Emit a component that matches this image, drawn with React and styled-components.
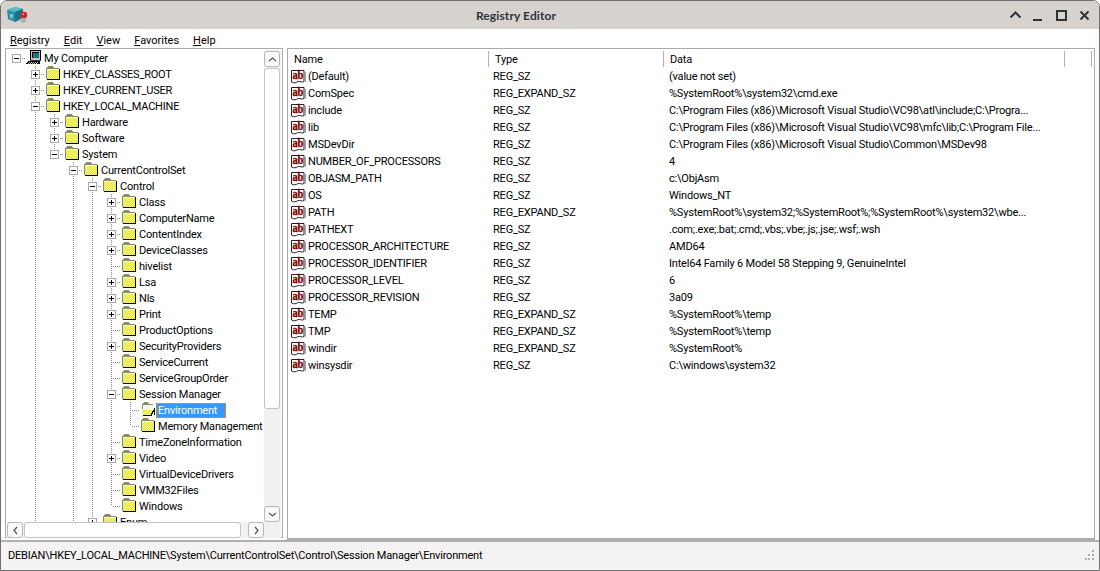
import React from 'react'
import styled, { createGlobalStyle } from 'styled-components'

const UI_FONT = 'Roboto, "Liberation Sans", Arial, sans-serif'

const Global = createGlobalStyle`
  html, body { margin: 0; padding: 0; background: #fff; }
  * { box-sizing: border-box; }
`

// ------------------------ window frame

const Win = styled.div`
  width: 1100px;
  height: 571px;
  display: flex;
  flex-direction: column;
  overflow: hidden;
  background: #fff;
  border: 1px solid #72706e;
  border-radius: 7px 7px 0 0;
  font: 11px ${UI_FONT};
  letter-spacing: -0.2px;
  color: #000;
`

const TitleBar = styled.div`
  height: 28px;
  flex: none;
  display: flex;
  align-items: center;
  background: #d6d2ce;
`

const AppIcon = styled.div`
  width: 30px;
  padding-left: 4px;
  display: flex;
  align-items: center;
`

const Title = styled.div`
  flex: 1;
  text-align: center;
  font: bold 12px Lato, "Noto Sans", sans-serif;
  letter-spacing: 0.1px;
  color: #2e3436;
`

const WinControls = styled.div`
  width: 98px;
  padding-left: 3px;
  display: flex;
  align-items: center;
`

const WinButton = styled.div`
  width: 23px;
  height: 16px;
  display: flex;
  justify-content: center;
  align-items: center;
`

const MenuBar = styled.div`
  height: 19px;
  flex: none;
  display: flex;
  align-items: center;
  gap: 14px;
  padding: 3px 0 0 9px;
  letter-spacing: 0;
  u { text-decoration: underline; }
`

const Main = styled.div`
  height: 492px;
  flex: none;
  display: flex;
  align-items: flex-start;
  gap: 4px;
  padding: 0 4px;
`

const StatusBar = styled.div`
  flex: 1;
  display: flex;
  align-items: center;
  justify-content: space-between;
  padding: 0 4px 2px 7px;
  background: #f4f2f2;
  border-top: 2px solid #b2b0ae;
`

// ------------------------ tree pane

const TreePane = styled.div`
  width: 278px;
  height: 490px;
  flex: none;
  display: flex;
  flex-direction: column;
  padding: 1px 1px 0;
  border: 1px solid #ababab;
`

const TreeTop = styled.div`
  height: 472px;
  display: flex;
`

const TreeView = styled.div`
  flex: 1;
  overflow: hidden;
`

const TreeRow = styled.div`
  height: 16px;
  display: flex;
  align-items: center;
  white-space: nowrap;
`

const Cell = styled.div`
  width: 19px;
  height: 16px;
  flex: none;
  position: relative;
  &::before {
    content: '';
    position: absolute;
    left: 9px;
    top: 0;
    width: 1px;
    height: ${p => (p.$v === 'full' ? '16px' : p.$v === 'half' ? '8px' : '0')};
    background: repeating-linear-gradient(to bottom, #8c8c8c 0 1px, transparent 1px 2px);
  }
  &::after {
    content: '';
    position: absolute;
    left: 10px;
    top: 8px;
    height: 1px;
    width: ${p => (p.$h ? '9px' : '0')};
    background: repeating-linear-gradient(to right, transparent 0 1px, #8c8c8c 1px 2px);
  }
`

const Expander = styled.div`
  position: absolute;
  z-index: 1;
  left: 5px;
  top: 4px;
  width: 9px;
  height: 9px;
  background: #fff;
  border: 1px solid #a8a8a8;
  &::before {
    content: '';
    position: absolute;
    left: 1px;
    top: 3px;
    width: 5px;
    height: 1px;
    background: #000;
  }
  &::after {
    content: '';
    position: absolute;
    left: 3px;
    top: 1px;
    width: 1px;
    height: ${p => (p.$open ? '0' : '5px')};
    background: #000;
  }
`

const NodeIcon = styled.div`
  width: 16px;
  height: 16px;
  flex: none;
  display: flex;
`

const NodeLabel = styled.span`
  height: 15px;
  line-height: 13px;
  padding: 0 1px;
  border: 1px solid transparent;
  ${p => p.$selected && `
    padding-right: 8px;
    background: #3399ff;
    color: #fff;
    border: 1px solid #e0821e;
  `}
`

// ------------------------ scrollbars

const VScroll = styled.div`
  width: 17px;
  flex: none;
  display: flex;
  flex-direction: column;
  align-items: center;
  background: #f2f0f0;
  padding-top: 1px;
  padding-right: 1px;
`

const HScroll = styled.div`
  height: 16px;
  flex: none;
  display: flex;
  align-items: center;
  background: #f2f0f0;
  padding-right: 17px;
`

const ScrollBtn = styled.div`
  width: 16px;
  height: 16px;
  flex: none;
  display: flex;
  justify-content: center;
  align-items: center;
  background: #fafafa;
  border: 1px solid #b8b8b8;
  border-radius: 3px;
`

const VThumb = styled.div`
  width: 16px;
  height: 341px;
  margin-top: 1px;
  background: #fff;
  border: 1px solid #c2c2c2;
  border-radius: 3px;
`

const HThumb = styled.div`
  width: 217px;
  height: 16px;
  margin-left: 1px;
  background: #fff;
  border: 1px solid #c2c2c2;
  border-radius: 3px;
`

const Spacer = styled.div`
  flex: 1;
`

// ------------------------ list pane

const ListPane = styled.div`
  flex: 1;
  height: 492px;
  padding: 1px 0 0 0;
  border: 1px solid #ababab;
  border-bottom-width: 2px;
  overflow: hidden;
`

const Columns = styled.div`
  display: grid;
  grid-template-columns: 201px 175px 401px 27px 1px;
  height: ${p => (p.$header ? '18px' : '17px')};
  align-items: center;
  white-space: nowrap;
`

const HeadCell = styled.div`
  height: 16px;
  line-height: 17px;
  padding-left: 6px;
  border-right: 1px solid #b4b4b4;
`

const NameCell = styled.div`
  display: flex;
  align-items: center;
  gap: 2px;
  padding-left: 3px;
`

const TextCell = styled.div`
  padding-left: ${p => p.$pad}px;
`

// ------------------------ drawings

// explicit pixels instead of an svg pattern, the pattern came out uneven between rows
const dither = (x0, y0, x1, y1) => {
  let d = ''
  for (let y = y0; y < y1; y++) {
    for (let x = x0; x < x1; x++) {
      if ((x + y) % 2 === 0) d += `M${x} ${y}h1v1h-1z`
    }
  }
  return d
}

const FOLDER_DOTS = dither(2, 4, 14, 13)
const OPEN_DOTS = dither(2, 8, 13, 13)

const Folder = () => (
  <svg width="16" height="16" viewBox="0 0 16 16" shapeRendering="crispEdges">
    <path d="M1 2h1V1h1V0h5v1h1v1h5v11H1z" fill="#ffff30" />
    <path d={FOLDER_DOTS} fill="#dedc90" />
    <path d="M1 2h1V1h1V0h5v1h1v1h5v1H2v10H1z" fill="#8a8a70" />
    <path d="M2 3h12v1H2z" fill="#fff" />
    <path d="M14 3h1v11H2v-1h12z" fill="#000" />
  </svg>
)

const OpenFolder = () => (
  <svg width="17" height="16" viewBox="0 0 17 16" shapeRendering="crispEdges">
    <path d="M2 2h1V1h1V0h5v1h1v1h4v5H2z" fill="#f4f4f0" />
    <path d="M2 2h1V1h1V0h5v1h1v1h4v1H3v4H2z" fill="#8a8a70" />
    <path d="M1 7h12v1h1v1h1v1h-1v1h-1v1h-1v1H4v-1H3v-1H2V9H1z" fill="#ffff30" />
    <path d={OPEN_DOTS} fill="#dedc90" />
    <path d="M1 7h12v1H2v1H1z" fill="#f4f4f0" />
    <path d="M14 8h1v2h-1v2h-1v2H3v-1h9v-2h1V9h1z" fill="#000" />
    <path d="M15 6h1v7h-1z" fill="#000" />
  </svg>
)

const ComputerIcon = () => (
  <svg width="16" height="16" viewBox="0 0 16 16" shapeRendering="crispEdges">
    <path d="M5 1h9v9H5z" fill="#c0c0c0" />
    <path d="M4 0h11v1H4zM4 1h1v9H4zM14 1h1v10h-1z" fill="#000" />
    <path d="M6 2h7v6H6z" fill="#008080" />
    <path d="M6 2h7v1H7v5H6z" fill="#000" />
    <path d="M4 10h11v1H4z" fill="#404040" />
    <path d="M2 11h12v1H2zM1 12h13v1H1zM0 13h14v1H0z" fill="#000" />
    <path d="M3 12h1v1H3zM5 12h1v1H5zM7 12h1v1H7zM9 12h1v1H9zM11 12h1v1h-1zM2 13h1v1H2zM4 13h1v1H4zM6 13h1v1H6zM8 13h1v1H8zM10 13h1v1h-1z" fill="#c0c0c0" />
  </svg>
)

const AbIcon = () => (
  <svg width="15" height="16" viewBox="0 0 15 16">
    <path d="M.5 1.5h12.5v11c-2 1.6-4-.9-6.2.2S3 14.4.5 13z" fill="#fff" stroke="#222" />
    <path d="M14.3 3v10" stroke="#8c8c8c" />
    <text x="1.4" y="10" textLength="11" lengthAdjust="spacingAndGlyphs" fontFamily="Liberation Serif, serif" fontWeight="bold" fontSize="12" fill="#800000" stroke="#800000" strokeWidth="0.35" letterSpacing="0">ab</text>
  </svg>
)

const RegIcon = () => (
  <svg width="24" height="20" viewBox="0 0 24 20">
    <path d="M2 5l8-3 8 2v9l-8 4-7-3z" fill="#2f8fa3" />
    <path d="M2 5l8-3 8 2-8 3z" fill="#58bccb" />
    <path d="M10 7v10l8-4V4z" fill="#1d7288" />
    <path d="M5 9h3v4H5z" fill="#6fc6d4" />
    <path d="M13 15l6-3 2 1v4l-3 1z" fill="#b4b2ae" />
    <circle cx="19" cy="10" r="3.2" fill="#d81f2c" />
    <circle cx="18.2" cy="9.2" r="1" fill="#f28f8f" />
  </svg>
)

const ChevUp = () => (
  <svg width="13" height="8" viewBox="0 0 13 8">
    <path d="M1.5 6.5l5-5 5 5" fill="none" stroke="#2e3436" strokeWidth="2" />
  </svg>
)

const Minimize = () => (
  <svg width="13" height="12" viewBox="0 0 13 12" shapeRendering="crispEdges">
    <path d="M1 10h9v2H1z" fill="#2e3436" />
  </svg>
)

const Maximize = () => (
  <svg width="11" height="11" viewBox="0 0 11 11" shapeRendering="crispEdges">
    <path d="M1 1h9v9H1z" fill="none" stroke="#2e3436" strokeWidth="2" />
  </svg>
)

const CloseX = () => (
  <svg width="11" height="11" viewBox="0 0 11 11">
    <path d="M1.5 1.5l8 8M9.5 1.5l-8 8" fill="none" stroke="#2e3436" strokeWidth="2" />
  </svg>
)

const Arrow = ({ dir }) => {
  const d = {
    up: 'M2 7l3.5-3L9 7',
    down: 'M2 4l3.5 3L9 4',
    left: 'M7 2L4 5.5 7 9',
    right: 'M4 2l3 3.5L4 9',
  }[dir]
  return (
    <svg width="11" height="11" viewBox="0 0 11 11">
      <path d={d} fill="none" stroke="#555" strokeWidth="1.2" />
    </svg>
  )
}

const Grip = () => (
  <svg width="10" height="10" viewBox="0 0 10 10" shapeRendering="crispEdges">
    <path d="M7 0h2v2H7zM7 4h2v2H7zM3 4h2v2H3zM7 8h2v2H7zM3 8h2v2H3zM0 8h2v2H0z" fill="#b0aeac" />
  </svg>
)

// ------------------------ data

const leaf = (label) => ({ label })
const plus = (label) => ({ label, closed: true })

const TREE = {
  label: 'My Computer',
  icon: 'computer',
  children: [
    plus('HKEY_CLASSES_ROOT'),
    plus('HKEY_CURRENT_USER'),
    {
      label: 'HKEY_LOCAL_MACHINE',
      more: true,
      children: [
        plus('Hardware'),
        plus('Software'),
        {
          label: 'System',
          children: [
            {
              label: 'CurrentControlSet',
              more: true,
              children: [
                {
                  label: 'Control',
                  children: [
                    plus('Class'),
                    plus('ComputerName'),
                    plus('ContentIndex'),
                    plus('DeviceClasses'),
                    leaf('hivelist'),
                    plus('Lsa'),
                    plus('Nls'),
                    plus('Print'),
                    leaf('ProductOptions'),
                    plus('SecurityProviders'),
                    leaf('ServiceCurrent'),
                    leaf('ServiceGroupOrder'),
                    {
                      label: 'Session Manager',
                      children: [
                        { label: 'Environment', selected: true },
                        leaf('Memory Management'),
                      ],
                    },
                    leaf('TimeZoneInformation'),
                    plus('Video'),
                    leaf('VirtualDeviceDrivers'),
                    leaf('VMM32Files'),
                    leaf('Windows'),
                  ],
                },
                plus('Enum'),
              ],
            },
          ],
        },
      ],
    },
  ],
}

const flatten = (node, level = 0, guides = [], hasNext = false, out = []) => {
  out.push({ ...node, level, guides, hasNext: hasNext || node.more })
  const kids = node.children || []
  const next = [...guides, hasNext || !!node.more]
  kids.forEach((kid, i) => flatten(kid, level + 1, next, i < kids.length - 1, out))
  return out
}

const ROWS = flatten(TREE)

const VALUES = [
  ['(Default)', 'REG_SZ', '(value not set)'],
  ['ComSpec', 'REG_EXPAND_SZ', '%SystemRoot%\\system32\\cmd.exe'],
  ['include', 'REG_SZ', 'C:\\Program Files (x86)\\Microsoft Visual Studio\\VC98\\atl\\include;C:\\Progra...'],
  ['lib', 'REG_SZ', 'C:\\Program Files (x86)\\Microsoft Visual Studio\\VC98\\mfc\\lib;C:\\Program File...'],
  ['MSDevDir', 'REG_SZ', 'C:\\Program Files (x86)\\Microsoft Visual Studio\\Common\\MSDev98'],
  ['NUMBER_OF_PROCESSORS', 'REG_SZ', '4'],
  ['OBJASM_PATH', 'REG_SZ', 'c:\\ObjAsm'],
  ['OS', 'REG_SZ', 'Windows_NT'],
  ['PATH', 'REG_EXPAND_SZ', '%SystemRoot%\\system32;%SystemRoot%;%SystemRoot%\\system32\\wbe...'],
  ['PATHEXT', 'REG_SZ', '.com;.exe;.bat;.cmd;.vbs;.vbe;.js;.jse;.wsf;.wsh'],
  ['PROCESSOR_ARCHITECTURE', 'REG_SZ', 'AMD64'],
  ['PROCESSOR_IDENTIFIER', 'REG_SZ', 'Intel64 Family 6 Model 58 Stepping 9, GenuineIntel'],
  ['PROCESSOR_LEVEL', 'REG_SZ', '6'],
  ['PROCESSOR_REVISION', 'REG_SZ', '3a09'],
  ['TEMP', 'REG_EXPAND_SZ', '%SystemRoot%\\temp'],
  ['TMP', 'REG_EXPAND_SZ', '%SystemRoot%\\temp'],
  ['windir', 'REG_EXPAND_SZ', '%SystemRoot%'],
  ['winsysdir', 'REG_SZ', 'C:\\windows\\system32'],
]

const MENUS = ['Registry', 'Edit', 'View', 'Favorites', 'Help']

const TreeLine = ({ row }) => {
  const expandable = row.children || row.closed
  return (
    <TreeRow>
      {row.guides.map((on, i) => (
        <Cell key={i} $v={on ? 'full' : 'none'} />
      ))}
      <Cell $v={row.level === 0 ? 'none' : row.hasNext ? 'full' : 'half'} $h>
        {expandable && <Expander $open={!!row.children} />}
      </Cell>
      <NodeIcon>
        {row.icon === 'computer' ? <ComputerIcon /> : row.selected ? <OpenFolder /> : <Folder />}
      </NodeIcon>
      <NodeLabel $selected={row.selected}>{row.label}</NodeLabel>
    </TreeRow>
  )
}

export default function App() {
  return (
    <Win>
      <Global />

      <TitleBar>
        <AppIcon><RegIcon /></AppIcon>
        <Title>Registry Editor</Title>
        <WinControls>
          <WinButton><ChevUp /></WinButton>
          <WinButton><Minimize /></WinButton>
          <WinButton><Maximize /></WinButton>
          <WinButton><CloseX /></WinButton>
        </WinControls>
      </TitleBar>

      <MenuBar>
        {MENUS.map((m) => (
          <span key={m}><u>{m[0]}</u>{m.slice(1)}</span>
        ))}
      </MenuBar>

      <Main>
        <TreePane>
          <TreeTop>
            <TreeView>
              {ROWS.map((row) => <TreeLine key={row.label} row={row} />)}
            </TreeView>
            <VScroll>
              <ScrollBtn><Arrow dir="up" /></ScrollBtn>
              <VThumb />
              <Spacer />
              <ScrollBtn><Arrow dir="down" /></ScrollBtn>
            </VScroll>
          </TreeTop>
          <HScroll>
            <ScrollBtn><Arrow dir="left" /></ScrollBtn>
            <HThumb />
            <Spacer />
            <ScrollBtn><Arrow dir="right" /></ScrollBtn>
          </HScroll>
        </TreePane>

        <ListPane>
          <Columns $header>
            <HeadCell>Name</HeadCell>
            <HeadCell>Type</HeadCell>
            <HeadCell>Data</HeadCell>
            <HeadCell />
          </Columns>
          {VALUES.map(([name, type, data]) => (
            <Columns key={name}>
              <NameCell><AbIcon />{name}</NameCell>
              <TextCell $pad={4}>{type}</TextCell>
              <TextCell $pad={5}>{data}</TextCell>
            </Columns>
          ))}
        </ListPane>
      </Main>

      <StatusBar>
        <span>DEBIAN\HKEY_LOCAL_MACHINE\System\CurrentControlSet\Control\Session Manager\Environment</span>
        <Grip />
      </StatusBar>
    </Win>
  )
}
